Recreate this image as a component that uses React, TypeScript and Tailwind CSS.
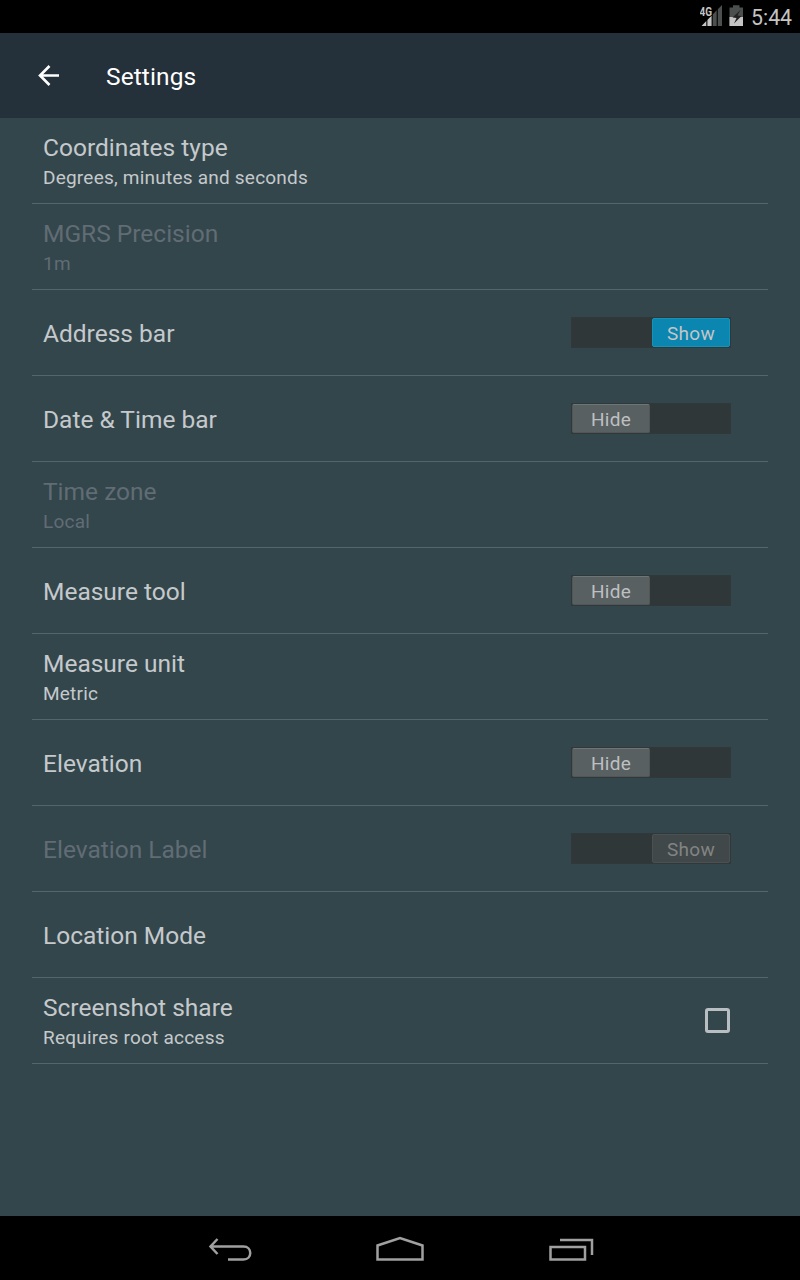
type Row = {
  title: string;
  summary?: string;
  disabled?: boolean;
  control?: 'show' | 'hide' | 'checkbox';
};

const rows: Row[] = [
  { title: 'Coordinates type', summary: 'Degrees, minutes and seconds' },
  { title: 'MGRS Precision', summary: '1m', disabled: true },
  { title: 'Address bar', control: 'show' },
  { title: 'Date & Time bar', control: 'hide' },
  { title: 'Time zone', summary: 'Local', disabled: true },
  { title: 'Measure tool', control: 'hide' },
  { title: 'Measure unit', summary: 'Metric' },
  { title: 'Elevation', control: 'hide' },
  { title: 'Elevation Label', control: 'show', disabled: true },
  { title: 'Location Mode' },
  { title: 'Screenshot share', summary: 'Requires root access', control: 'checkbox' },
];

function StatusBar() {
  return (
    <div className="flex h-[33px] shrink-0 items-start justify-end bg-black pr-2">
      <svg className="mt-1 h-6 w-6" viewBox="0 0 24 24">
        <path d="M12.700 10.500 16.700 6.300V22H12.700ZM17.800 5.200 22 1V22H17.800Z" fill="#4b4f4d" />
        <path d="M1.500 22 6.300 17V22ZM7.400 16 11.600 11.600V22H7.400Z" fill="#c4c4c4" />
        <text x="-0.500" y="11.500" fontSize="13" fontWeight="700" fill="#c4c4c4" stroke="#000" strokeWidth="1.500" paintOrder="stroke" textLength="12.500" lengthAdjust="spacingAndGlyphs">4G</text>
      </svg>
      <svg className="ml-[5px] mt-1 h-6 w-4" viewBox="0 0 16 24">
        <path d="M4 1.200h6.500V3.500H14v18.500H0.500V3.500H4Z" fill="#4b4f4d" />
        <path d="M0.500 13H14v9H0.500Z" fill="#c4c4c4" />
        <path d="M11.500 6 3.500 13.500l4 .5-2.500 5.500 7.500-7.500-4-.5Z" fill="#222" />
      </svg>
      <span className="ml-[6px] mt-[5px] w-[41px] whitespace-nowrap text-[21.300px] leading-[26px] text-[#c4c4c4]">5:44</span>
    </div>
  );
}

function Toggle({ on, disabled }: { on: boolean; disabled?: boolean }) {
  const thumb = disabled
    ? 'border-[#4d5050] bg-[#414849] text-[#818484]'
    : on
      ? 'border-[#1594ba] bg-[#0a86b0] text-[#c4c5c7]'
      : 'border-[#525656] border-t-[#6f7474] bg-[#596062] text-[#bdbfc1]';
  return (
    <div className={`mb-px mr-[37px] flex h-[31px] w-[160px] border border-[#2f393c] bg-[#303739] ${on ? 'justify-end' : ''}`}>
      <div className={`h-[29px] w-[78px] rounded-[2px] border text-center text-[19px] leading-[29px] tracking-[0.300px] ${thumb}`}>
        {on ? 'Show' : 'Hide'}
      </div>
    </div>
  );
}

function SettingRow({ title, summary, disabled, control }: Row) {
  return (
    <div className="flex h-[86px] items-center border-b border-[#52666b] pl-[11px]">
      <div className={`flex flex-1 flex-col ${disabled ? 'text-[#616c74]' : 'text-[#c5c9cb]'} ${summary ? 'pt-[3px]' : 'pt-[2px]'}`}>
        <span className="text-[24.500px] leading-8">{title}</span>
        {summary && <span className="text-[19px] leading-[28px] tracking-[0.220px]">{summary}</span>}
      </div>
      {control === 'checkbox' && <div className="mr-[38px] h-[25px] w-[25px] rounded-[3px] border-[3px] border-[#b8bec1]" />}
      {(control === 'show' || control === 'hide') && <Toggle on={control === 'show'} disabled={disabled} />}
    </div>
  );
}

function NavBar() {
  return (
    <div className="flex h-16 shrink-0 bg-black pl-[208px]">
      <svg className="h-16 w-[44px]" viewBox="0 0 44 64" fill="none" stroke="#a0a0a0" strokeWidth="2.500">
        <path d="M9.500 23 2.500 30.500 9.500 38M2.500 30.500H35.500C44.500 30.500 44.500 43.500 35.500 43.500H20" />
      </svg>
      <svg className="ml-[124px] h-16 w-12" viewBox="0 0 48 64" fill="none" stroke="#a0a0a0" strokeWidth="2.500">
        <path d="M1.500 43.500V29.500L24 22 46.500 29.500V43.500Z" />
      </svg>
      <svg className="ml-[124px] h-16 w-12" viewBox="0 0 48 64" fill="none" stroke="#a0a0a0" strokeWidth="2.500">
        <path d="M2.500 31H37v12.500H2.500ZM12 24H44V39" />
      </svg>
    </div>
  );
}

export default function App() {
  return (
    <div className="flex h-[1280px] w-[800px] flex-col overflow-hidden bg-[#33464c] font-[Roboto,sans-serif]">
      <StatusBar />
      <header className="flex h-[85px] shrink-0 items-center bg-[#24303a] pl-[37px] pt-[2px] text-white">
        <svg className="h-6 w-6" viewBox="0 0 24 24" fill="none" stroke="currentColor" strokeWidth="2.600">
          <path d="M12.500 1 3 10.500l9.500 9.500M3 10.500h19" />
        </svg>
        <h1 className="ml-[45px] text-[24.500px] leading-8 tracking-[0.100px]">Settings</h1>
      </header>
      <main className="flex-1 px-8">
        {rows.map((row) => (
          <SettingRow key={row.title} {...row} />
        ))}
      </main>
      <NavBar />
    </div>
  );
}
